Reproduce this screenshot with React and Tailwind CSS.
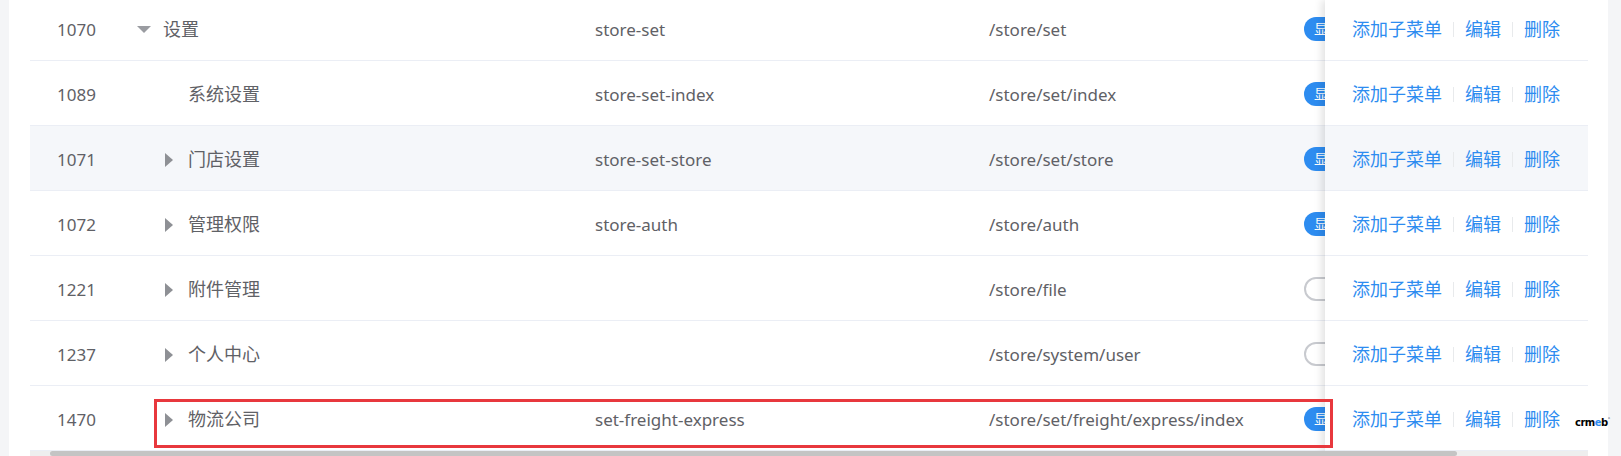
const rows = [
  { id: 1070, name: '设置', level: 0, arrow: 'down', key: 'store-set', path: '/store/set', on: true },
  { id: 1089, name: '系统设置', level: 1, arrow: null, key: 'store-set-index', path: '/store/set/index', on: true },
  { id: 1071, name: '门店设置', level: 1, arrow: 'right', key: 'store-set-store', path: '/store/set/store', on: true, hover: true },
  { id: 1072, name: '管理权限', level: 1, arrow: 'right', key: 'store-auth', path: '/store/auth', on: true },
  { id: 1221, name: '附件管理', level: 1, arrow: 'right', key: '', path: '/store/file', on: false },
  { id: 1237, name: '个人中心', level: 1, arrow: 'right', key: '', path: '/store/system/user', on: false },
  { id: 1470, name: '物流公司', level: 1, arrow: 'right', key: 'set-freight-express', path: '/store/set/freight/express/index', on: true },
]

function Caret({ dir }) {
  if (dir === 'down') {
    return (
      <svg width="14" height="8" viewBox="0 0 14 8">
        <polygon points="0,0 14,0 7,7" fill="#9a9ca1" />
      </svg>
    )
  }
  if (dir === 'right') {
    return (
      <svg width="8" height="14" viewBox="0 0 8 14">
        <polygon points="0,0 8,7 0,14" fill="#8e9095" />
      </svg>
    )
  }
  return null
}

function Switch({ on }) {
  if (on) {
    return (
      <div className="flex items-center h-[24px] w-[60px] rounded-full bg-[#2d8cf0] pl-[10px] text-white text-[14px] leading-none shrink-0">
        显示
      </div>
    )
  }
  return <div className="h-[24px] w-[60px] rounded-full border-2 border-[#c8cacf] bg-white shrink-0" />
}

function MainRow({ r }) {
  return (
    <div className={`flex items-center h-[65px] pt-[3px] border-b border-[#ebeef5] text-[#5f6166] ${r.hover ? 'bg-[#f5f7fa]' : 'bg-white'}`}>
      <div className="w-[107px] pl-[27px] text-[17px] shrink-0">{r.id}</div>
      <div className="w-[458px] flex items-center shrink-0">
        <div className={`flex items-center ${r.level ? 'ml-[25px]' : ''}`}>
          <div className="w-[14px] flex justify-center items-center">
            <Caret dir={r.arrow} />
          </div>
          <span className="ml-[12px] text-[18px]">{r.name}</span>
        </div>
      </div>
      <div className="w-[394px] text-[17px] shrink-0">{r.key}</div>
      <div className="w-[315px] text-[17px] shrink-0">{r.path}</div>
      <div className="w-[21px] shrink-0 flex items-center -mt-[2px]">
        <Switch on={r.on} />
      </div>
    </div>
  )
}

function ActionRow({ r }) {
  return (
    <div className={`flex items-center h-[65px] pt-[3px] border-b border-[#ebeef5] pl-[27px] text-[18px] text-[#2d8cf0] ${r.hover ? 'bg-[#f5f7fa]' : 'bg-white'}`}>
      <span>添加子菜单</span>
      <span className="w-px h-[15px] bg-[#e8eaec] mx-[11px]" />
      <span>编辑</span>
      <span className="w-px h-[15px] bg-[#e8eaec] mx-[11px]" />
      <span>删除</span>
    </div>
  )
}

export default function App() {
  return (
    <div className="relative flex w-[1621px] h-[456px] bg-[#f4f5f7] overflow-hidden font-['Noto_Sans','Noto_Sans_CJK_SC',sans-serif]">
      <div className="w-[9px] shrink-0" />
      <div className="w-[1599px] bg-white pl-[21px] pr-[20px] shrink-0">
        <div className="flex flex-col w-[1558px]">
          <div className="flex h-[451px] overflow-hidden">
            <div className="w-[1295px] overflow-hidden shrink-0">
              <div className="-mt-[4px]">
                {rows.map(r => <MainRow key={r.id} r={r} />)}
              </div>
            </div>
            <div className="relative z-10 w-[263px] shrink-0 bg-white shadow-[-3px_0_8px_rgba(0,0,0,0.12)]">
              <div className="-mt-[4px]">
                {rows.map(r => <ActionRow key={r.id} r={r} />)}
              </div>
            </div>
          </div>
          <div className="h-[5px] bg-[#eeeeee]">
            <div className="ml-[20px] w-[1407px] h-[5px] rounded-full bg-[#c4c4c4]" />
          </div>
        </div>
      </div>

      <div className="absolute left-[154px] top-[399px] w-[1179px] h-[49px] border-[3px] border-[#e8383d] z-20" />

      <div className="absolute left-[1575px] top-[417px] z-20 flex items-end font-['DejaVu_Sans',sans-serif] font-bold text-[10px] leading-none tracking-[-0.5px] text-black">
        <span>crm</span>
        <span className="text-[#2d8cf0]">e</span>
        <span>b</span>
        <span className="text-[5px] mb-[6px] text-gray-500">°</span>
      </div>
    </div>
  )
}
